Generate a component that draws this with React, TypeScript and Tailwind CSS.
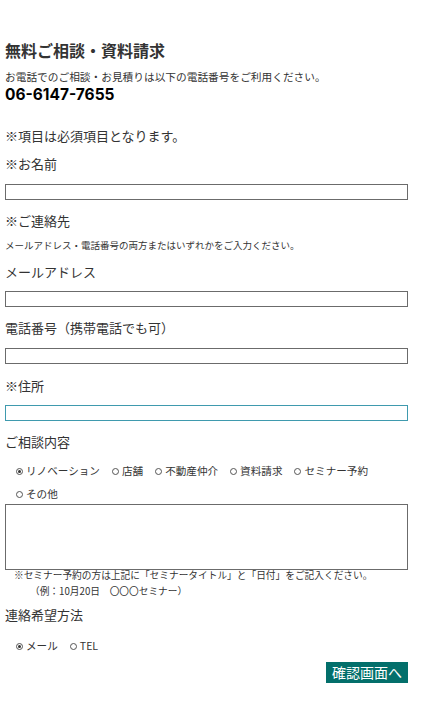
import type { ReactNode } from "react";

const jp = { fontFamily: '"Noto Sans CJK JP", "Noto Sans", sans-serif' };

function Label({ children, mt }: { children: ReactNode; mt: string }) {
  return <p className={`${mt} h-[18px] text-[13px] leading-[18px] text-[#333]`}>{children}</p>;
}

function Field({ mt, focus = false }: { mt: string; focus?: boolean }) {
  return (
    <div
      className={`${mt} h-[16px] w-full border ${
        focus ? "border-[#3f9aae]" : "border-[#6b6b6b]"
      } bg-white`}
    />
  );
}

function Radio({ label, checked = false }: { label: string; checked?: boolean }) {
  return (
    <span className="inline-flex items-center gap-[3px]">
      <span className="flex h-[7px] w-[7px] items-center justify-center rounded-full border border-[#555]">
        {checked ? <span className="h-[3px] w-[3px] rounded-full bg-[#333]" /> : null}
      </span>
      <span>{label}</span>
    </span>
  );
}

export default function App() {
  return (
    <div className="h-[720px] w-[421px] overflow-hidden bg-white pt-[40px] pr-[13px] pl-[5px] text-[#333]" style={jp}>
      <h1 className="h-[20px] text-[16px] leading-[20px] font-bold text-[#333]">
        無料ご相談・資料請求
      </h1>
      <p className="mt-[10px] h-[14px] text-[10.7px] leading-[14px] text-[#333]">
        お電話でのご相談・お見積りは以下の電話番号をご利用ください。
      </p>
      <p
        className="mt-[1px] h-[20px] text-[15.5px] leading-[20px] font-bold text-black"
        style={{ fontFamily: 'Inter, "Noto Sans", sans-serif' }}
      >
        06-6147-7655
      </p>

      <Label mt="mt-[22px]">※項目は必須項目となります。</Label>

      <Label mt="mt-[10px]">※お名前</Label>
      <Field mt="mt-[11px]" />

      <Label mt="mt-[12px]">※ご連絡先</Label>
      <p className="mt-[8px] h-[14px] text-[9.5px] leading-[14px] text-[#333]">
        メールアドレス・電話番号の両方またはいずれかをご入力ください。
      </p>

      <Label mt="mt-[11px]">メールアドレス</Label>
      <Field mt="mt-[10px]" />

      <Label mt="mt-[12px]">電話番号（携帯電話でも可）</Label>
      <Field mt="mt-[11px]" />

      <Label mt="mt-[13px]">※住所</Label>
      <Field mt="mt-[10px]" focus />

      <Label mt="mt-[12px]">ご相談内容</Label>
      <div className="mt-[12px] flex h-[16px] items-center gap-[12px] pl-[11px] text-[10.6px] leading-[16px]">
        <Radio label="リノベーション" checked />
        <Radio label="店舗" />
        <Radio label="不動産仲介" />
        <Radio label="資料請求" />
        <Radio label="セミナー予約" />
      </div>
      <div className="mt-[7px] flex h-[16px] items-center pl-[11px] text-[10.6px] leading-[16px]">
        <Radio label="その他" />
      </div>
      <div className="mt-[2px] h-[66px] w-full border border-[#6b6b6b] bg-white" />
      <p className="-mt-[3px] h-[16px] pl-[9px] text-[9.7px] leading-[16px] text-[#333]">
        ※セミナー予約の方は上記に「セミナータイトル」と「日付」をご記入ください。
      </p>
      <p className="h-[16px] pl-[25px] text-[9.7px] leading-[16px] text-[#333]">
        （例：10月20日　〇〇〇セミナー）
      </p>

      <Label mt="mt-[7px]">連絡希望方法</Label>
      <div className="mt-[14px] flex h-[16px] items-center gap-[12px] pl-[11px] text-[10.6px] leading-[16px]">
        <Radio label="メール" checked />
        <Radio label="TEL" />
      </div>

      <div className="mt-[8px] flex justify-end">
        <button className="h-[21px] bg-[#036f6b] px-[6px] text-[14px] leading-[21px] text-white">
          確認画面へ
        </button>
      </div>
    </div>
  );
}
